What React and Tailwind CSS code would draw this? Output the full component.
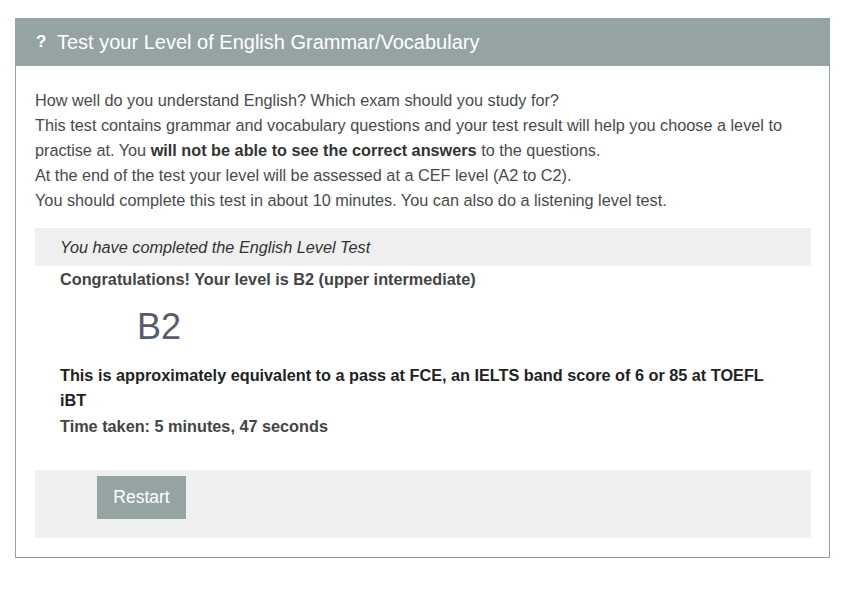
export default function App() {
  return (
    <div className="bg-white w-[861px] h-[592px] pt-[18px] pl-[15px] font-['Liberation_Sans',Arial,sans-serif]">
      <div className="w-[815px] border border-[#959f9e] border-t-0">
        <div className="h-[48px] bg-[#95a4a3] flex items-center pl-[20px] text-white -mx-px">
          <span className="text-[17px] font-bold w-[22px] pl-[1px]">?</span>
          <span className="text-[20px]">Test your Level of English Grammar/Vocabulary</span>
        </div>
        <div className="pl-[19px] pr-[18px] pt-[22px] pb-[19px] text-[#4a4a4a] text-[16.25px] leading-[25px]">
          <p>How well do you understand English? Which exam should you study for?</p>
          <p>
            This test contains grammar and vocabulary questions and your test result will help you choose a level to practise at. You{' '}
            <b className="text-[#333]">will not be able to see the correct answers</b> to the questions.
          </p>
          <p>At the end of the test your level will be assessed at a CEF level (A2 to C2).</p>
          <p>You should complete this test in about 10 minutes. You can also do a listening level test.</p>

          <div className="mt-[15px] bg-[#efefef] h-[38px] flex items-center pl-[25px] italic text-[#333]">
            You have completed the English Level Test
          </div>
          <div className="pl-[25px] pr-[25px]">
            <p className="font-bold text-[#444] mt-[1px]">Congratulations! Your level is B2 (upper intermediate)</p>
            <p className="pl-[77px] text-[36px] leading-[50px] text-[#575c6b] mt-[10px]">B2</p>
            <p className="font-bold text-[#222] mt-[11px]">This is approximately equivalent to a pass at FCE, an IELTS band score of 6 or 85 at TOEFL iBT</p>
            <p className="font-bold text-[#444] mt-[1px]">Time taken: 5 minutes, 47 seconds</p>
          </div>
          <div className="mt-[31px] bg-[#efefef] h-[68px] pl-[62px] pt-[6px]">
            <button className="bg-[#95a4a3] text-white text-[17.5px] w-[89px] h-[43px]">Restart</button>
          </div>
        </div>
      </div>
    </div>
  );
}
